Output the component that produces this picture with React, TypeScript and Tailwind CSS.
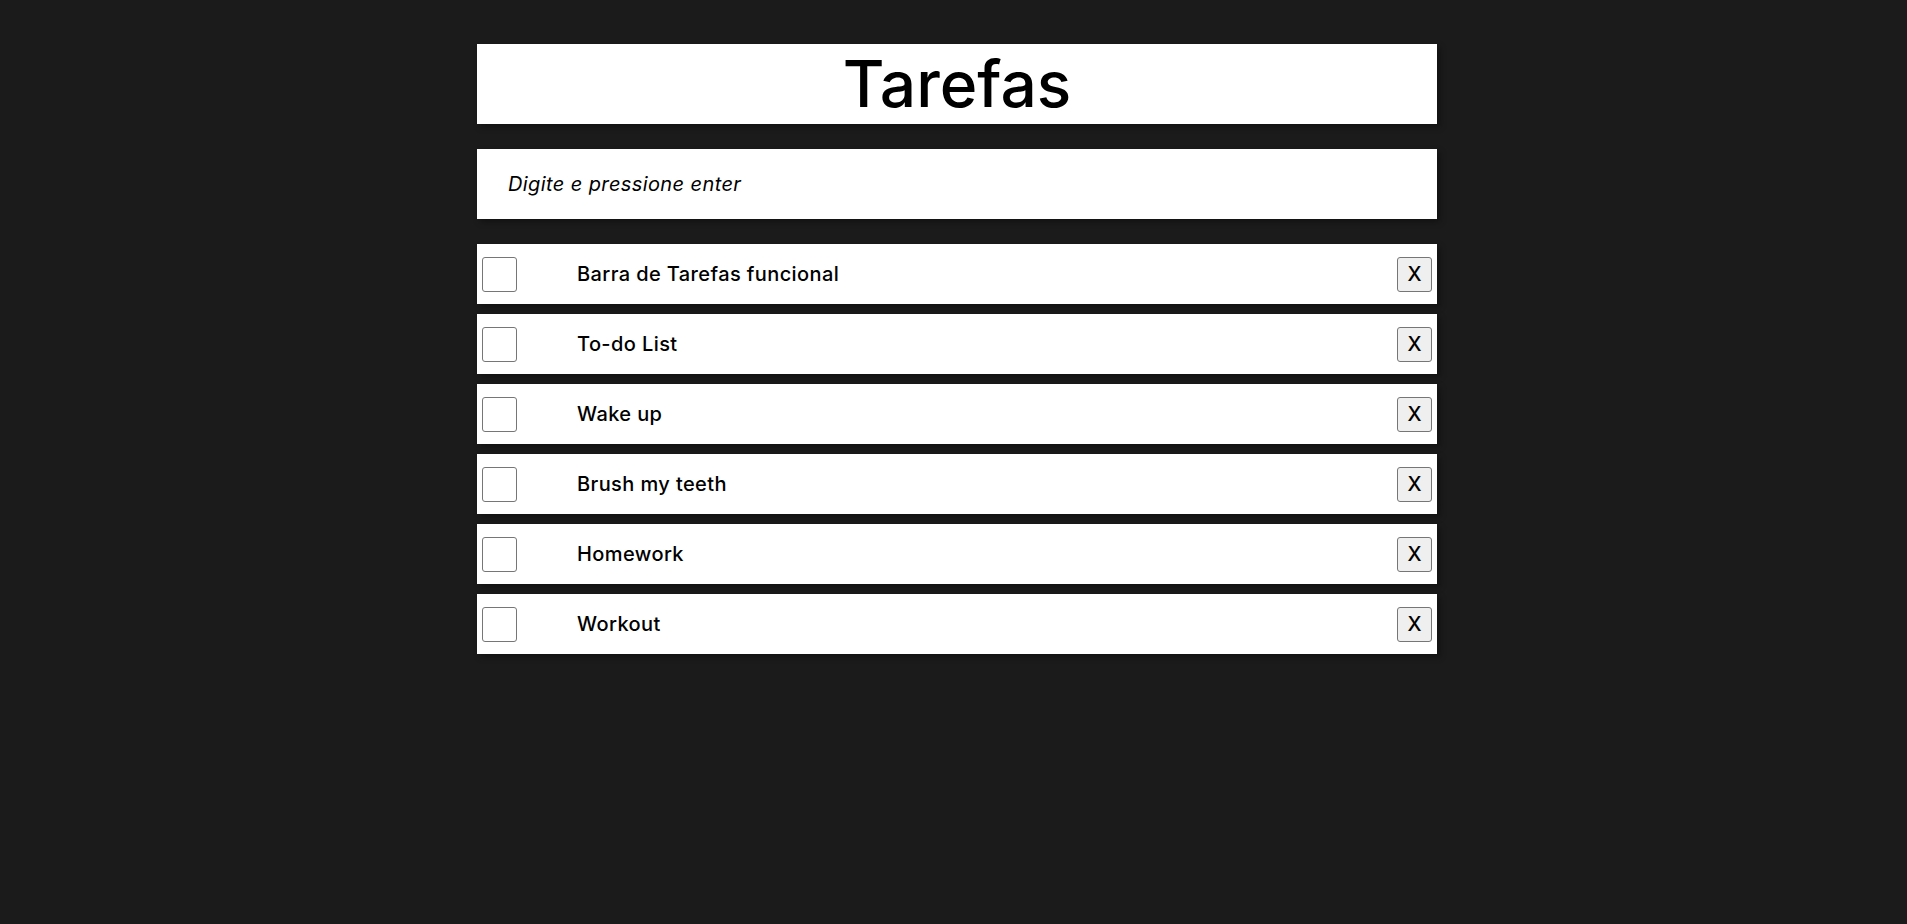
import React, { useState } from "react";

type Task = { id: number; text: string; done: boolean };

const initialTasks: Task[] = [
  { id: 1, text: "Barra de Tarefas funcional", done: false },
  { id: 2, text: "To-do List", done: false },
  { id: 3, text: "Wake up", done: false },
  { id: 4, text: "Brush my teeth", done: false },
  { id: 5, text: "Homework", done: false },
  { id: 6, text: "Workout", done: false },
];

function TaskItem({
  task,
  onToggle,
  onRemove,
}: {
  task: Task;
  onToggle: () => void;
  onRemove: () => void;
}): JSX.Element {
  return (
    <li className="w-full h-[60px] flex flex-row items-center bg-white shadow-[3px_3px_6px_rgba(0,0,0,0.35)]">
      <input
        type="checkbox"
        checked={task.done}
        onChange={onToggle}
        className="appearance-none w-[35px] h-[35px] ml-[5px] shrink-0 rounded-[3px] border border-[#767676] bg-white checked:bg-[#0075ff]"
      />
      <span
        className={
          task.done
            ? "ml-[60px] flex-1 text-[20px] font-medium tracking-[0.02em] text-black line-through"
            : "ml-[60px] flex-1 text-[20px] font-medium tracking-[0.02em] text-black"
        }
      >
        {task.text}
      </span>
      <button
        onClick={onRemove}
        className="w-[35px] h-[35px] mr-[5px] shrink-0 flex justify-center items-center rounded-[3px] border border-[#767676] bg-[#efefef] text-[20px] font-medium text-black leading-none"
      >
        X
      </button>
    </li>
  );
}

export default function App(): JSX.Element {
  const [tasks, setTasks] = useState<Task[]>(initialTasks);
  const [value, setValue] = useState("");

  return (
    <div className="min-h-screen w-full bg-[#1b1b1b] font-['Inter',sans-serif] pl-[7px] pt-[44px]">
      <div className="w-[960px] mx-auto flex flex-col">
        <header className="w-full h-[80px] flex justify-center items-center bg-white shadow-[3px_3px_6px_rgba(0,0,0,0.35)]">
          <h1 className="text-[64px] font-medium text-black leading-none">Tarefas</h1>
        </header>
        <input
          value={value}
          onChange={(e) => setValue(e.target.value)}
          onKeyDown={(e) => {
            if (e.key === "Enter" && value.trim()) {
              setTasks([...tasks, { id: Date.now(), text: value.trim(), done: false }]);
              setValue("");
            }
          }}
          placeholder="Digite e pressione enter"
          className="w-full h-[70px] mt-[25px] px-[31px] bg-white text-[20px] italic tracking-[0.02em] text-black placeholder:text-black outline-none shadow-[3px_3px_6px_rgba(0,0,0,0.35)]"
        />
        <ul className="mt-[25px] flex flex-col gap-[10px]">
          {tasks.map((t) => (
            <TaskItem
              key={t.id}
              task={t}
              onToggle={() =>
                setTasks(tasks.map((x) => (x.id === t.id ? { ...x, done: !x.done } : x)))
              }
              onRemove={() => setTasks(tasks.filter((x) => x.id !== t.id))}
            />
          ))}
        </ul>
      </div>
    </div>
  );
}
